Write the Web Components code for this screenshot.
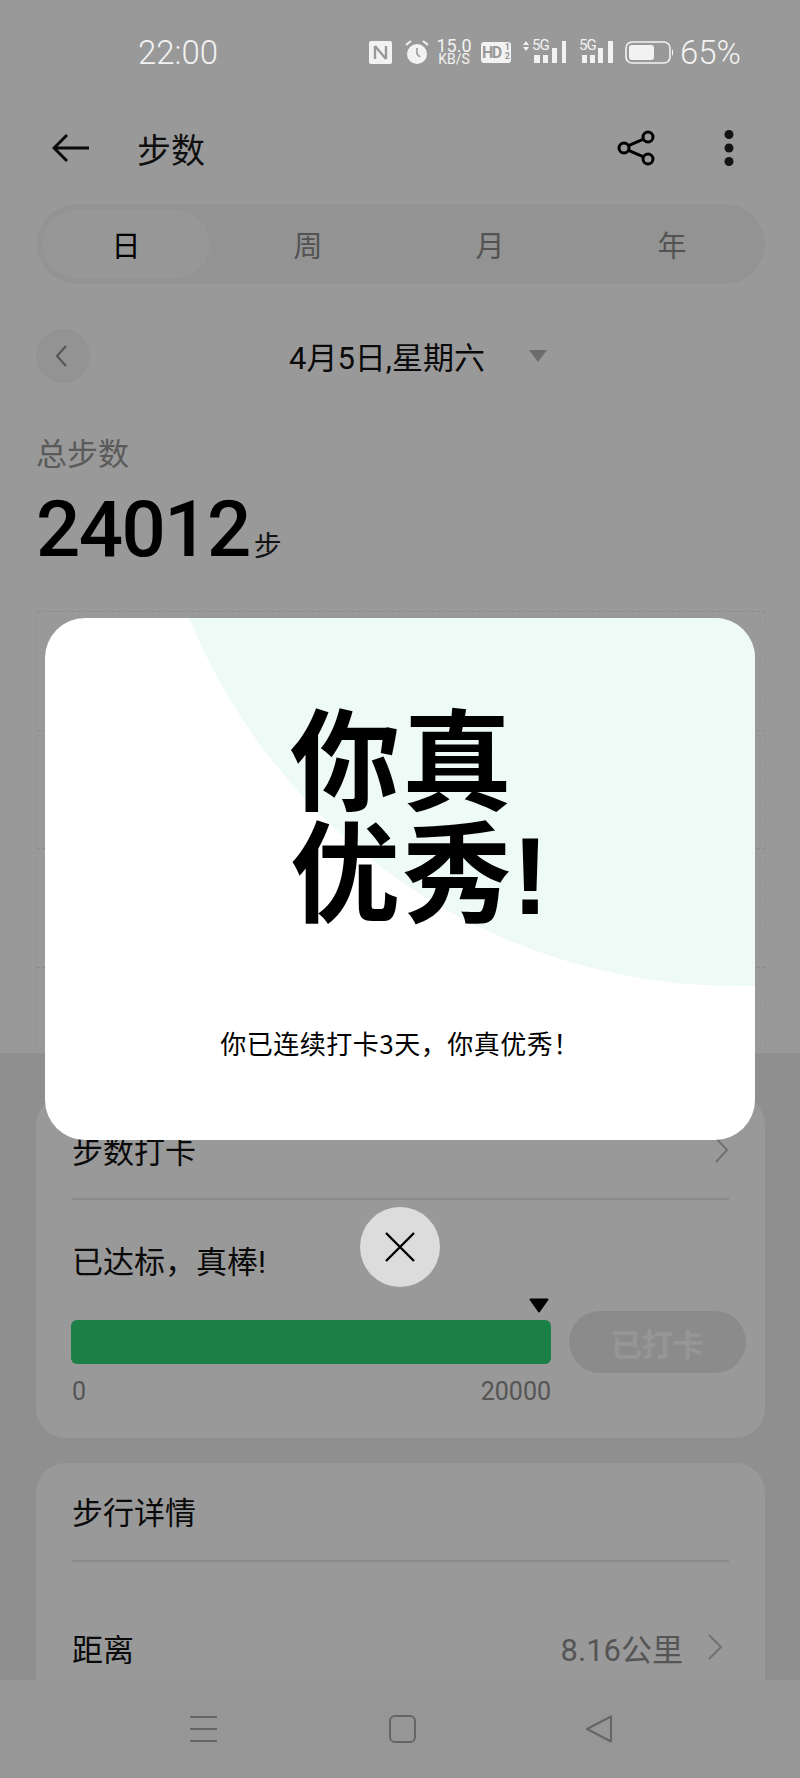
<!DOCTYPE html>
<html lang="zh">
<head>
<meta charset="utf-8">
<title>步数</title>
<style>
html, body { margin: 0; height: 1778px; overflow: hidden; background: #fff; }
body { font-family: Roboto, "Noto Sans CJK SC", sans-serif; position: relative; }
</style>
</head>
<body>
<status-bar></status-bar>
<app-bar title="步数"></app-bar>
<range-tabs></range-tabs>
<date-row></date-row>
<step-total></step-total>
<step-chart></step-chart>
<section-gap>
  <checkin-card></checkin-card>
  <detail-card></detail-card>
</section-gap>
<nav-bar></nav-bar>
<praise-dialog></praise-dialog>

<script>
"use strict";
const CJK = 'Roboto, "Noto Sans CJK SC", sans-serif';

/* helper, every element below just sets its markup in an open shadow root */
class Base extends HTMLElement {
    constructor () {
        super();
        this.attachShadow({mode: 'open'});
        this.shadowRoot.innerHTML = this.markup();
    }
    markup() { return ''; }
}

class StatusBar extends Base {
    markup() { return `
<style>
:host { display: flex; align-items: center; position: relative; z-index: 5; height: 104px; padding-left: 138px; color: #f2f2f2; font-family: ${CJK}; }
.time { font-size: 33px; font-weight: 300; width: 231px; }
.icons { display: flex; align-items: center; }
svg { display: block; }
.speed { display: flex; flex-direction: column; align-items: center; width: 36px; margin-left: 6px; line-height: 1; }
.speed b { font-weight: 400; font-size: 18px; height: 14px; line-height: 14px; }
.speed i { font-style: normal; font-size: 14px; height: 13px; line-height: 13px; }
.hd { width: 30px; height: 21px; margin-left: 9px; border-radius: 3px; background: #f2f2f2; color: #999; font-size: 16px; font-weight: 700; display: flex; align-items: center; justify-content: center; letter-spacing: -1.500px; }
.hd span { display: flex; flex-direction: column; font-size: 9px; line-height: 9px; margin-left: 2px; letter-spacing: 0; }
.sig { position: relative; height: 24px; }
.sig span { position: absolute; top: -1px; font-size: 15px; font-weight: 400; line-height: 13px; letter-spacing: -1px; }
.pct { font-size: 33px; font-weight: 300; margin-left: 5px; }
</style>
<div class="time">22:00</div>
<div class="icons">
  <svg width="23" height="23" viewBox="0 0 23 23"><rect width="23" height="23" rx="2" fill="#f2f2f2"/><path d="M6 5v13M6 5l11 13M17 5v13" stroke="#999" stroke-width="2.400" fill="none"/></svg>
  <svg width="26" height="26" viewBox="0 0 26 26" style="margin-left:12px"><circle cx="13" cy="15" r="10" fill="#f2f2f2"/><path d="M13 9v6l3 3" stroke="#999" stroke-width="1.600" fill="none"/><path d="M2 6l5-4M24 6l-5-4" stroke="#f2f2f2" stroke-width="2"/></svg>
  <div class="speed"><b>15.0</b><i>KB/S</i></div>
  <div class="hd">HD<span><span>1</span><span>2</span></span></div>
  <div class="sig" style="margin-left:11px;width:45px">
    <svg width="45" height="24" viewBox="0 0 45 24" style="position:absolute;left:0;top:0"><path d="M1 5l3-4 3 4zM1 7l3 4 3-4z" fill="#f2f2f2"/><path d="M12 15h6v8h-6zM21 15h5v8h-5zM30 8h5v15h-5zM40 1h4v22h-4z" fill="#f2f2f2"/></svg>
    <span style="left:10px">5G</span>
  </div>
  <div class="sig" style="margin-left:12px;width:35px">
    <svg width="35" height="24" viewBox="0 0 35 24" style="position:absolute;left:0;top:0"><path d="M3 15h5v8H3zM11 15h5v8h-5zM19 8h5v15h-5zM29 1h5v22h-5z" fill="#f2f2f2"/></svg>
    <span style="left:0">5G</span>
  </div>
  <svg width="50" height="23" viewBox="0 0 50 23" style="margin-left:11px"><rect x="1" y="1" width="44" height="21" rx="6" fill="none" stroke="#f2f2f2" stroke-width="1.600"/><rect x="4" y="4" width="25" height="15" rx="3" fill="#f2f2f2"/><path d="M47 8c1.500 1 1.500 6 0 7z" fill="#f2f2f2"/></svg>
  <div class="pct">65%</div>
</div>`; }
}

class AppBar extends Base {
    markup() { return `
<style>
:host { display: flex; align-items: center; box-sizing: border-box; height: 92px; padding: 0 66px 4px 52px; font-family: ${CJK}; color: #1a1a1a; }
svg { display: block; }
h1 { flex: 1; margin: 0 0 0 47px; font-size: 34px; font-weight: 400; }
.dots { margin-left: 69px; }
</style>
<svg width="38" height="30" viewBox="0 0 38 30"><path d="M37 15H2M15 2L2 15l13 13" fill="none" stroke="#111" stroke-width="3"/></svg>
<h1>${this.getAttribute('title')}</h1>
<svg width="38" height="36" viewBox="0 0 38 36"><circle cx="7" cy="18" r="5" fill="none" stroke="#000" stroke-width="3"/><circle cx="31" cy="7" r="5" fill="none" stroke="#000" stroke-width="3"/><circle cx="31" cy="29" r="5" fill="none" stroke="#000" stroke-width="3"/><path d="M11.500 15.700l15-6.500M11.500 20.300l15 6.500" stroke="#000" stroke-width="3"/></svg>
<svg class="dots" width="10" height="36" viewBox="0 0 10 36"><circle cx="5" cy="4.500" r="4.500" fill="#222"/><circle cx="5" cy="18" r="4.500" fill="#222"/><circle cx="5" cy="31.500" r="4.500" fill="#222"/></svg>`; }
}

class RangeTabs extends Base {
    markup() { return `
<style>
:host { display: grid; grid-template-columns: 175px repeat(3, 182px); align-items: center; box-sizing: border-box; width: 728px; height: 80px; margin: 8px 0 0 37px; padding: 6px 0 6px 5px; border-radius: 40px; background: #f5f5f5; font-family: ${CJK}; font-size: 29px; color: #8a8a8a; }
div { display: flex; align-items: center; justify-content: center; height: 68px; }
.on { width: 168px; border-radius: 34px; background: #fcfcfc; color: #000; }
</style>
<div class="on">日</div><div>周</div><div>月</div><div>年</div>`; }
}

class DateRow extends Base {
    markup() { return `
<style>
:host { display: flex; align-items: center; height: 54px; margin: 45px 0 0 36px; font-family: ${CJK}; font-size: 31px; color: #111; }
.back { width: 54px; height: 54px; border-radius: 50%; background: #f5f5f5; display: flex; align-items: center; justify-content: center; }
.label { margin-left: 199px; width: 240px; padding-bottom: 2px; }
.tri { width: 0; height: 0; border: 9px solid transparent; border-top: 12px solid #b4b4b4; border-bottom: 0; }
svg { display: block; margin-right: 4px; }
</style>
<div class="back"><svg width="14" height="24" viewBox="0 0 14 24"><path d="M12 2L3 12l9 10" fill="none" stroke="#8a8a8a" stroke-width="2"/></svg></div>
<div class="label">4月5日,星期六</div>
<div class="tri"></div>`; }
}

class StepTotal extends Base {
    markup() { return `
<style>
:host { display: block; margin: 50px 0 0 36px; font-family: ${CJK}; }
.cap { font-size: 31px; line-height: 44px; color: #969696; }
.num { display: flex; align-items: baseline; margin-top: 10px; line-height: 86px; height: 86px; color: #000; }
b { font-size: 78px; font-weight: 500; letter-spacing: -1.600px; }
span { font-size: 28px; margin-left: 4px; color: #222; }
</style>
<div class="cap">总步数</div>
<div class="num"><b>24012</b><span>步</span></div>`; }
}

class StepChart extends Base {
    markup() { return `
<style>
:host { display: grid; grid-template-rows: repeat(4, 118.500px); box-sizing: border-box; width: 730px; height: 442px; margin: 38px 0 0 36px; border: 1px dashed #f4f4f4; border-width: 0 1px; }
div { border-top: 1px dashed #e8e8e8; }
</style>
<div></div><div></div><div></div><div></div>`; }
}

class SectionGap extends Base {
    markup() { return `
<style>
:host { display: flex; flex-direction: column; gap: 25px; box-sizing: border-box; height: 627px; padding: 42px 35px 0 36px; background: #eeeeee; overflow: hidden; }
</style>
<slot></slot>`; }
}

class CheckinCard extends Base {
    markup() { return `
<style>
:host { display: block; flex: none; box-sizing: border-box; height: 343px; padding: 0 36px; background: #fff; border-radius: 30px; font-family: ${CJK}; color: #111; }
.head { display: flex; align-items: center; justify-content: space-between; height: 105px; padding-top: 6px; box-sizing: border-box; border-bottom: 2px solid #e8e8e8; font-size: 31px; }
svg { display: block; }
.msg { font-size: 31px; line-height: 44px; margin-top: 41px; }
.row { position: relative; display: flex; gap: 18px; align-items: center; margin-top: 26px; margin-right: -18px; }
.mark { position: absolute; left: 456px; top: -13px; }
.bar { width: 480px; height: 44px; border-radius: 6px; background: #2dd576; margin-left: -1px; }
.btn { width: 177px; height: 62px; border-radius: 31px; background: #e8e8e8; color: #fafafa; font-weight: 700; font-size: 31px; display: flex; align-items: center; justify-content: center; }
.scale { display: flex; justify-content: space-between; width: 479px; font-size: 25px; color: #8e8e8e; line-height: 28px; margin-top: 5px; }
</style>
<div class="head">步数打卡<svg width="15" height="26" viewBox="0 0 15 26"><path d="M2 1l11 12L2 25" fill="none" stroke="#bdbdbd" stroke-width="2"/></svg></div>
<div class="msg">已达标，真棒!</div>
<div class="row"><svg class="mark" width="22" height="15" viewBox="0 0 22 15"><path d="M2.500 1.500h17L11 13.500z" fill="#000" stroke="#000" stroke-width="2" stroke-linejoin="round"/></svg><div class="bar"></div><div class="btn">已打卡</div></div>
<div class="scale"><span>0</span><span>20000</span></div>`; }
}

class DetailCard extends Base {
    markup() { return `
<style>
:host { display: block; flex: none; box-sizing: border-box; height: 300px; padding: 0 36px; background: #fff; border-radius: 30px; font-family: ${CJK}; font-size: 31px; color: #111; }
.head { height: 99px; box-sizing: border-box; padding-top: 29px; line-height: 44px; border-bottom: 2px solid #e8e8e8; }
.row { display: flex; align-items: center; justify-content: space-between; height: 44px; margin-top: 63px; }
.val { display: flex; align-items: center; gap: 24px; color: #8e8e8e; padding-right: 6px; }
svg { display: block; }
</style>
<div class="head">步行详情</div>
<div class="row"><span>距离</span><span class="val">8.16公里<svg width="16" height="26" viewBox="0 0 16 26"><path d="M2 1l12 12L2 25" fill="none" stroke="#bdbdbd" stroke-width="2"/></svg></span></div>`; }
}

class NavBar extends Base {
    markup() { return `
<style>
:host { position: absolute; left: 0; right: 0; top: 1680px; height: 98px; display: flex; justify-content: center; gap: 172px; padding: 35px 0 0 3px; box-sizing: border-box; background: #fbfbfb; }
svg { display: block; }
</style>
<svg width="27" height="28" viewBox="0 0 27 28"><path d="M0 2h27M0 14h27M0 26h27" stroke="#a8a8a8" stroke-width="2"/></svg>
<svg width="27" height="28" viewBox="0 0 27 28"><rect x="1" y="1" width="25" height="26" rx="5" fill="none" stroke="#a8a8a8" stroke-width="2"/></svg>
<svg width="27" height="28" viewBox="0 0 27 28" style="margin-left:-2px"><path d="M25 1.500v25L1 14z" fill="none" stroke="#a8a8a8" stroke-width="2" stroke-linejoin="round"/></svg>`; }
}

/* overlay, the scrim is what greys everything under it */
class PraiseDialog extends Base {
    markup() { return `
<style>
:host { position: absolute; inset: 0; z-index: 3; display: flex; flex-direction: column; align-items: center; padding-top: 618px; box-sizing: border-box; background: rgba(0,0,0,.4); font-family: ${CJK}; }
.card { position: relative; overflow: hidden; width: 710px; height: 522px; border-radius: 40px; background: #fff; color: #000; }
.blob { position: absolute; left: 0; top: 0; }
.big { position: relative; margin: 80px 0 0 245px; font-size: 110px; font-weight: 700; line-height: 112px; letter-spacing: 2px; font-family: "Noto Sans CJK SC", sans-serif; }
.big div { height: 112px; }
.big i { font-style: normal; letter-spacing: 0; }
.big span { font-family: "Liberation Sans", sans-serif; }
.sub { position: relative; margin-top: 103px; text-align: center; font-size: 26px; letter-spacing: .5px; line-height: 36px; font-family: "Noto Sans CJK SC", sans-serif; }
.close { width: 80px; height: 80px; margin-top: 67px; border-radius: 50%; background: #dcdcdc; display: flex; align-items: center; justify-content: center; }
svg { display: block; }
</style>
<div class="card">
  <svg class="blob" width="710" height="522" viewBox="0 0 710 522"><circle cx="692" cy="-224" r="592" fill="#eefaf5"/></svg>
  <div class="big"><div>你真</div><div>优<i>秀</i><span>!</span></div></div>
  <div class="sub">你已连续打卡3天，你真优秀！</div>
</div>
<div class="close"><svg width="32" height="32" viewBox="0 0 32 32"><path d="M2 2l28 28M30 2L2 30" stroke="#000" stroke-width="2.400"/></svg></div>`; }
}

customElements.define('status-bar', StatusBar);
customElements.define('app-bar', AppBar);
customElements.define('range-tabs', RangeTabs);
customElements.define('date-row', DateRow);
customElements.define('step-total', StepTotal);
customElements.define('step-chart', StepChart);
customElements.define('section-gap', SectionGap);
customElements.define('checkin-card', CheckinCard);
customElements.define('detail-card', DetailCard);
customElements.define('nav-bar', NavBar);
customElements.define('praise-dialog', PraiseDialog);
</script>
</body>
</html>
